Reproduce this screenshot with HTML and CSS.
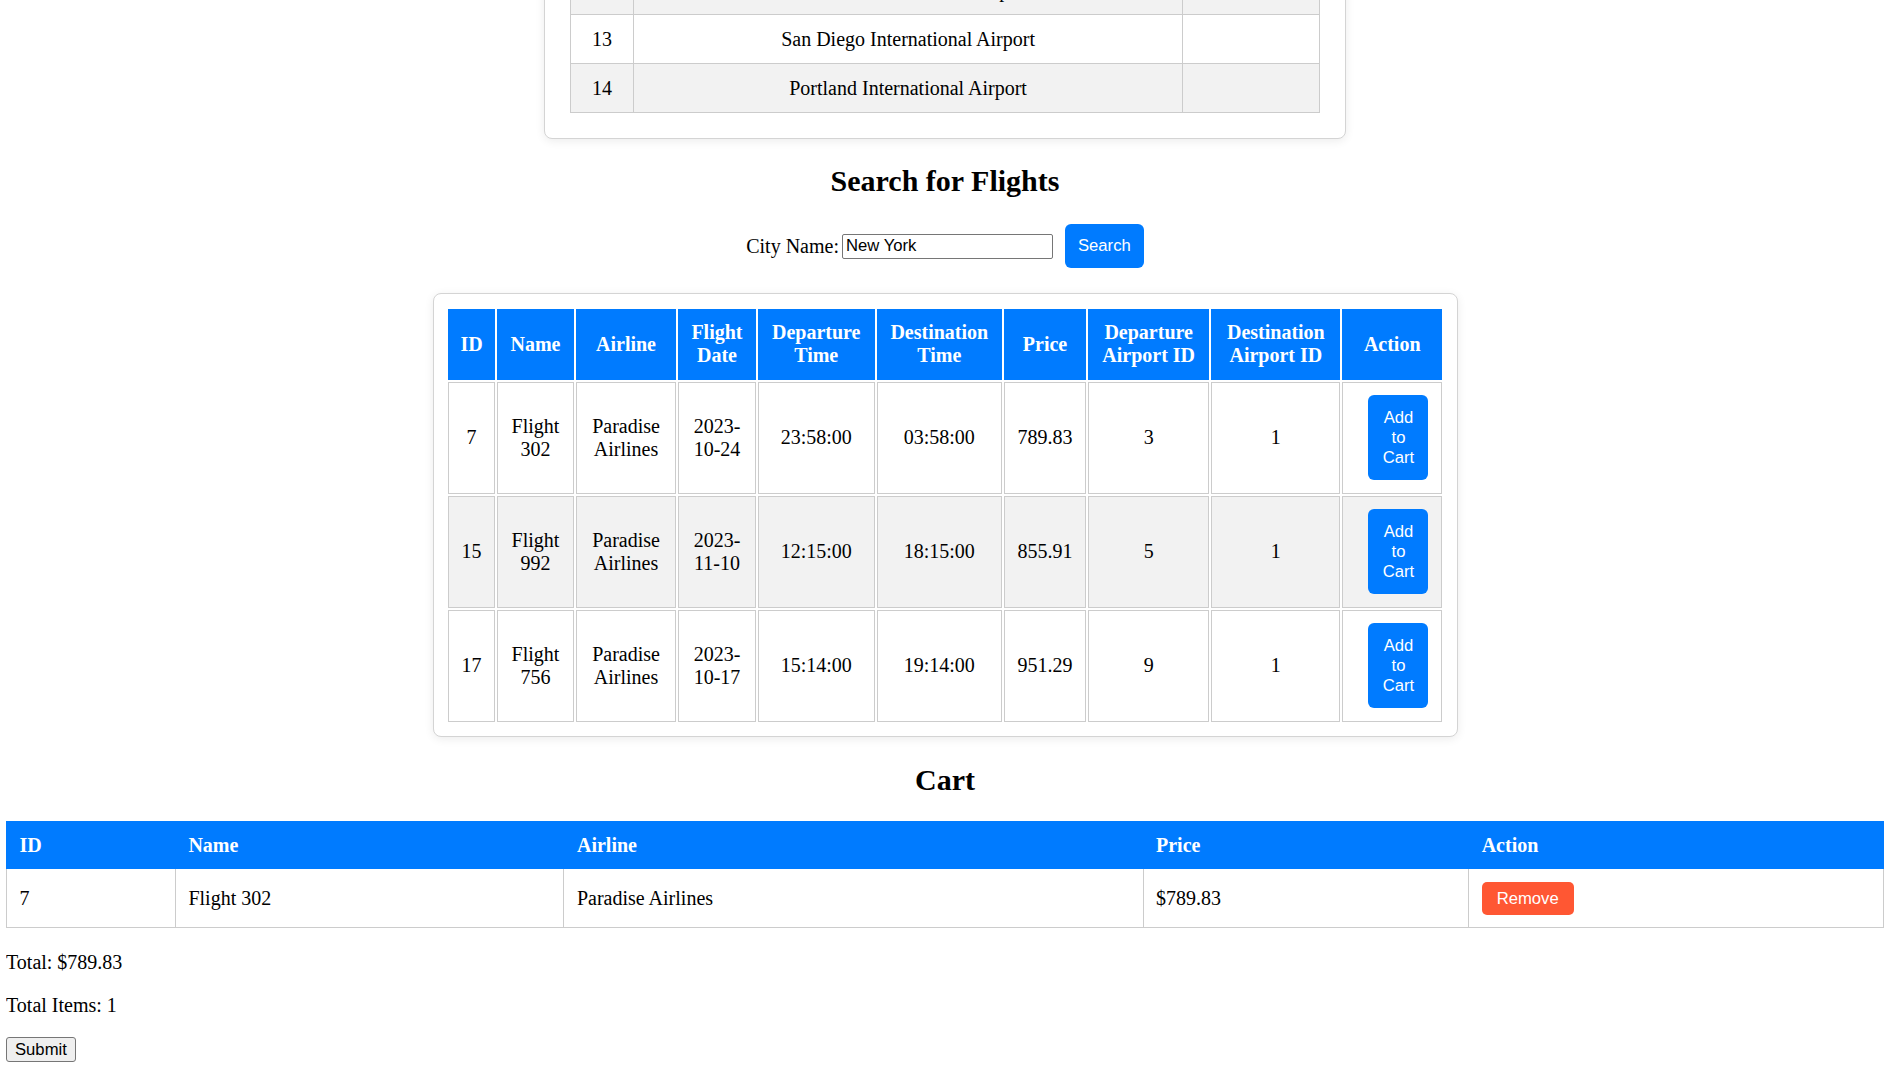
FILE: index.html
```html
<!DOCTYPE html>
<html lang="en">
<head>
<meta charset="utf-8">
<title>Flights</title>
<link rel="stylesheet" href="styles.css">
</head>
<body>
<div class="page">
  <section class="card airport-card">
    <table class="airport-table">
      <colgroup>
        <col class="a-id"><col class="a-name"><col class="a-extra">
      </colgroup>
      <tbody>
        <tr class="shade"><td>12</td><td>Nashville International Airport</td><td></td></tr>
        <tr><td>13</td><td>San Diego International Airport</td><td></td></tr>
        <tr class="shade"><td>14</td><td>Portland International Airport</td><td></td></tr>
      </tbody>
    </table>
  </section>

  <h2 class="heading heading-search">Search for Flights</h2>
  <form class="search-form">
    <label class="city-label" for="city">City Name:</label><input class="city-input" id="city" type="text" value="New York"><button class="btn-primary" type="button">Search</button>
  </form>

  <section class="card flights-card">
    <table class="flights-table">
      <colgroup>
        <col class="f-id"><col class="f-name"><col class="f-airline"><col class="f-date"><col class="f-dep"><col class="f-dest"><col class="f-price"><col class="f-depair"><col class="f-destair"><col class="f-action">
      </colgroup>
      <thead>
        <tr>
          <th>ID</th><th>Name</th><th>Airline</th><th>Flight Date</th><th>Departure Time</th><th>Destination Time</th><th>Price</th><th>Departure Airport ID</th><th>Destination Airport ID</th><th>Action</th>
        </tr>
      </thead>
      <tbody>
        <tr>
          <td>7</td><td>Flight 302</td><td>Paradise Airlines</td><td>2023-10-24</td><td>23:58:00</td><td>03:58:00</td><td>789.83</td><td>3</td><td>1</td>
          <td><button class="btn-add" type="button">Add to Cart</button></td>
        </tr>
        <tr class="shade">
          <td>15</td><td>Flight 992</td><td>Paradise Airlines</td><td>2023-11-10</td><td>12:15:00</td><td>18:15:00</td><td>855.91</td><td>5</td><td>1</td>
          <td><button class="btn-add" type="button">Add to Cart</button></td>
        </tr>
        <tr>
          <td>17</td><td>Flight 756</td><td>Paradise Airlines</td><td>2023-10-17</td><td>15:14:00</td><td>19:14:00</td><td>951.29</td><td>9</td><td>1</td>
          <td><button class="btn-add" type="button">Add to Cart</button></td>
        </tr>
      </tbody>
    </table>
  </section>

  <h2 class="heading heading-cart">Cart</h2>
  <table class="cart-table">
    <colgroup>
      <col class="c-id"><col class="c-name"><col class="c-airline"><col class="c-price"><col class="c-action">
    </colgroup>
    <thead>
      <tr><th>ID</th><th>Name</th><th>Airline</th><th>Price</th><th>Action</th></tr>
    </thead>
    <tbody>
      <tr><td>7</td><td>Flight 302</td><td>Paradise Airlines</td><td>$789.83</td><td><button class="btn-remove" type="button">Remove</button></td></tr>
    </tbody>
  </table>
  <p class="summary summary-first">Total: $789.83</p>
  <p class="summary">Total Items: 1</p>
  <button class="btn-submit" type="button">Submit</button>
</div>
</body>
</html>
```

FILE: styles.css
```css
html {
  overflow: hidden;
}

body {
  margin: 0 9px 0 6px;
  font-family: "Liberation Serif", "Times New Roman", serif;
  font-size: 20px;
  color: #000;
  background: #fff;
}

.page {
  margin-top: -61px;
}

.card {
  background: #fff;
  border: 1px solid #d4d4d4;
  border-radius: 8px;
  box-shadow: 0 2px 10px rgba(0, 0, 0, 0.08);
  box-sizing: border-box;
  margin: 0 auto;
}

/* Airports (scrolled, only the tail is visible) */
.airport-card {
  width: 802px;
  padding: 25px;
}

.airport-table {
  width: 100%;
  border-collapse: collapse;
}

.airport-table td {
  height: 49px;
  padding: 0 12px;
  border: 1px solid #ccc;
  text-align: center;
  box-sizing: border-box;
}

.a-id { width: 63px; }
.a-name { width: 550px; }
.a-extra { width: 137px; }

.shade td {
  background: #f2f2f2;
}

/* Headings */
.heading {
  font-size: 30px;
  font-weight: bold;
  text-align: center;
  line-height: 33px;
}

.heading-search {
  margin: 25px 0 27px;
}

.heading-cart {
  margin: 26px 0 25px;
}

/* Search form */
.search-form {
  display: flex;
  justify-content: center;
  align-items: center;
  margin: 0 0 25px;
}

.city-label {
  margin-right: 3px;
}

.city-input {
  width: 211px;
  height: 25px;
  box-sizing: border-box;
  border: 1px solid #767676;
  border-radius: 2px;
  padding: 1px 3px;
  font-family: "Liberation Sans", Arial, sans-serif;
  font-size: 16.67px;
  color: #000;
}

.btn-primary {
  margin-left: 12px;
  height: 44px;
  padding: 0 13px;
  border: none;
  border-radius: 6px;
  background: #007bff;
  color: #fff;
  font-family: "Liberation Sans", Arial, sans-serif;
  font-size: 16.67px;
}

/* Flights */
.flights-card {
  width: 1025px;
  padding: 12.5px;
}

.flights-table {
  width: 100%;
  border-spacing: 2.5px;
}

.flights-table th,
.flights-table td {
  padding: 12.5px;
  text-align: center;
  line-height: 23px;
}

.flights-table th {
  background: #007bff;
  color: #fff;
  font-weight: bold;
  border: 0;
  padding: 12.5px 11px;
}

.flights-table td {
  border: 1px solid #ccc;
}

.f-id { width: 4.8%; }
.f-name { width: 7.9%; }
.f-airline { width: 10.3%; }
.f-date { width: 8%; }
.f-dep { width: 12%; }
.f-dest { width: 12.9%; }
.f-price { width: 8.3%; }
.f-depair { width: 12.5%; }
.f-destair { width: 13.3%; }
.f-action { width: 10%; }

.btn-add {
  margin-left: 12.5px;
  padding: 12.5px 10px;
  width: 60px;
  border: none;
  border-radius: 6px;
  background: #007bff;
  color: #fff;
  font-family: "Liberation Sans", Arial, sans-serif;
  font-size: 16.67px;
  line-height: 20px;
}

/* Cart */
.cart-table {
  width: 100%;
  border-collapse: collapse;
}

.cart-table th,
.cart-table td {
  padding: 12.5px;
  text-align: left;
  line-height: 23px;
}

.cart-table th {
  background: #007bff;
  color: #fff;
  font-weight: bold;
  border: 1px solid #007bff;
  line-height: 21px;
}

.cart-table td {
  border: 1px solid #ccc;
}

.c-id { width: 9%; }
.c-name { width: 20.7%; }
.c-airline { width: 30.85%; }
.c-price { width: 17.35%; }
.c-action { width: 22.1%; }

.btn-remove {
  padding: 7px 15px;
  border: none;
  border-radius: 5px;
  background: #ff5733;
  color: #fff;
  font-family: "Liberation Sans", Arial, sans-serif;
  font-size: 16.67px;
  line-height: 19px;
}

.summary {
  margin: 20px 0;
  line-height: 23px;
}

.summary-first {
  margin-top: 23px;
}

.btn-submit {
  display: block;
  height: 25px;
  padding: 0 8px;
  border: 1px solid #767676;
  border-radius: 3px;
  background: #efefef;
  color: #000;
  font-family: "Liberation Sans", Arial, sans-serif;
  font-size: 16.67px;
}
```
